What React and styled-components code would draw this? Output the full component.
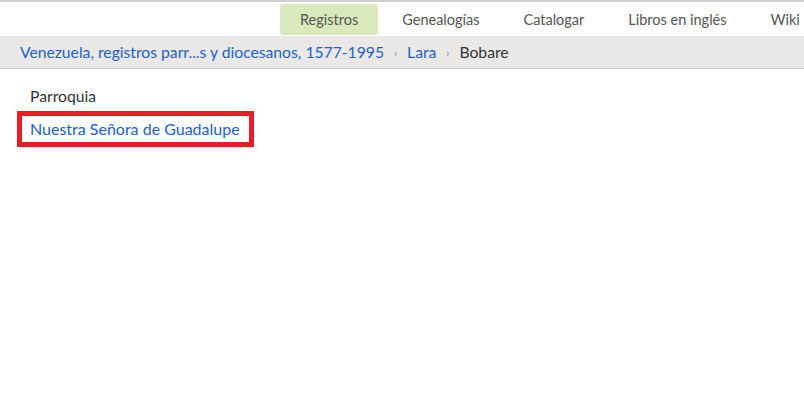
import React from "react";
import styled, { createGlobalStyle } from "styled-components";

const Global = createGlobalStyle`
  html, body { margin: 0; padding: 0; background: #fff; }
  body { font-family: "Lato", "Noto Sans", sans-serif; color: #333; }
`;

const Page = styled.div`
  width: 804px;
  border-top: 2px solid #cfcfcf;
  overflow: hidden;
`;

const Nav = styled.nav`
  display: flex;
  gap: 4px;
  padding: 2px 0 0 280px;
  height: 32px;
  white-space: nowrap;
`;

const Tab = styled.a`
  display: flex;
  align-items: center;
  height: 31px;
  padding: 0 20px;
  border-radius: 3px;
  font-size: 14.5px;
  color: #555;
  text-decoration: none;
  background: ${(p) => (p.$active ? "#dbeabd" : "transparent")};
`;

const Crumbs = styled.div`
  display: flex;
  align-items: center;
  height: 32px;
  padding-left: 20px;
  background: #ebe9e7;
  border-bottom: 1px solid #c8c8c8;
  font-size: 15.7px;
`;

const CrumbLink = styled.a`
  color: #2160c8;
  text-decoration: none;
`;

const Sep = styled.span`
  margin: 0 10px;
  font-size: 11px;
  color: #888;
`;

const Current = styled.span`
  color: #333;
`;

const Content = styled.div`
  display: flex;
  flex-direction: column;
  align-items: flex-start;
  padding: 17px 0 0 17px;
`;

const Label = styled.div`
  padding-left: 13px;
  font-size: 15.7px;
  color: #333;
  line-height: 20px;
`;

const Highlight = styled.div`
  margin-top: 5px;
  border: 5px solid #ed1c24;
  padding: 2px 9px 3px 8px;
`;

const ParishLink = styled.a`
  font-size: 16px;
  line-height: 21px;
  color: #2160c8;
  text-decoration: none;
`;

export default function App() {
  return (
    <Page>
      <Global />
      <Nav>
        <Tab $active href="#">Registros</Tab>
        <Tab href="#">Genealogías</Tab>
        <Tab href="#">Catalogar</Tab>
        <Tab href="#">Libros en inglés</Tab>
        <Tab href="#">Wiki</Tab>
      </Nav>
      <Crumbs>
        <CrumbLink href="#">Venezuela, registros parr...s y diocesanos, 1577-1995</CrumbLink>
        <Sep>›</Sep>
        <CrumbLink href="#">Lara</CrumbLink>
        <Sep>›</Sep>
        <Current>Bobare</Current>
      </Crumbs>
      <Content>
        <Label>Parroquia</Label>
        <Highlight>
          <ParishLink href="#">Nuestra Señora de Guadalupe</ParishLink>
        </Highlight>
      </Content>
    </Page>
  );
}
